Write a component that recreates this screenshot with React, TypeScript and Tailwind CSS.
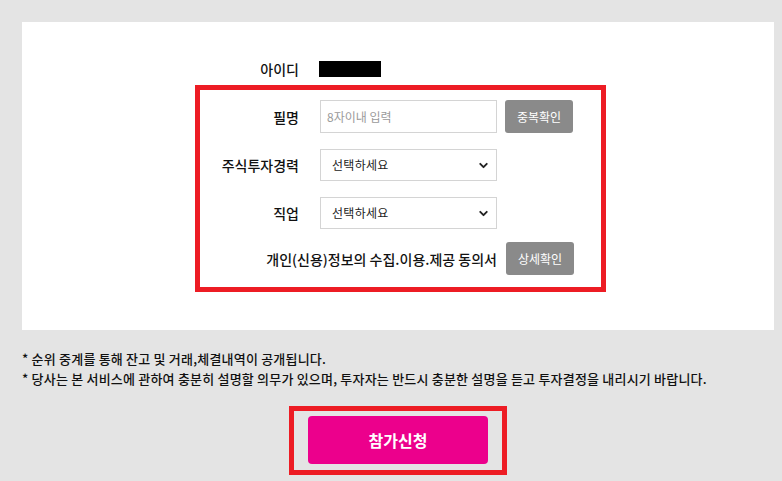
import { ChevronDown } from 'lucide-react';

const font = "font-['Noto_Sans_CJK_KR','Noto_Sans',sans-serif]";

function Row({ label, children, className = '' }: { label: string; children: React.ReactNode; className?: string }) {
  return (
    <div className={`flex items-center ${className}`}>
      <div className="w-[99px] shrink-0 text-right text-[14px] leading-[20px] font-medium text-[#111]">{label}</div>
      <div className="ml-[21px] flex items-center">{children}</div>
    </div>
  );
}

function Select() {
  return (
    <div className="relative w-[177px]">
      <select className="block h-[32px] w-full appearance-none border border-[#d4d4d4] bg-white pl-[11px] text-[12px] tracking-[0.3px] text-[#222] outline-none">
        <option>선택하세요</option>
      </select>
      <ChevronDown
        size={13}
        strokeWidth={3.5}
        className="pointer-events-none absolute right-[7px] top-[10px] text-[#222]"
      />
    </div>
  );
}

function GrayButton({ children }: { children: React.ReactNode }) {
  return (
    <button className="block h-[33px] w-[68px] rounded-[3px] bg-[#8a8a8a] text-[12px] text-white">{children}</button>
  );
}

export default function App() {
  return (
    <div className={`min-h-[481px] w-[782px] bg-[#e4e4e4] pl-[22px] pt-[22px] ${font}`}>
      <div className="h-[308px] w-[752px] bg-white pt-[37px]">
        {/* 아이디 */}
        <div className="ml-[178px] flex h-[20px] items-center">
          <div className="w-[99px] text-right text-[14px] leading-[20px] font-medium text-[#111]">아이디</div>
          <div className="ml-[20px] h-[16px] w-[62px] bg-black" />
        </div>

        <div className="ml-[173px] mt-[6px] w-[411px] border-[5px] border-[#ed1c24] pb-[12px] pt-[10px]">
          <Row label="필명">
            <input
              placeholder="8자이내 입력"
              className="block h-[33px] w-[177px] border border-[#d4d4d4] pl-[6px] text-[12px] outline-none placeholder:text-[#9a9a9a]"
            />
            <div className="ml-[8px]">
              <GrayButton>중복확인</GrayButton>
            </div>
          </Row>
          <Row label="주식투자경력" className="mt-[16px]">
            <Select />
          </Row>
          <Row label="직업" className="mt-[16px]">
            <Select />
          </Row>
          <div className="mt-[13px] flex items-center justify-end pr-[27px]">
            <span className="text-[14px] leading-[20px] font-medium text-[#111]">개인(신용)정보의 수집.이용.제공 동의서</span>
            <div className="ml-[9px]">
              <GrayButton>상세확인</GrayButton>
            </div>
          </div>
        </div>
      </div>

      <div className="mt-[19px] text-[13px] font-medium leading-[20px] tracking-[0.2px] text-[#111]">
        <p>* 순위 중계를 통해 잔고 및 거래,체결내역이 공개됩니다.</p>
        <p>* 당사는 본 서비스에 관하여 충분히 설명할 의무가 있으며, 투자자는 반드시 충분한 설명을 듣고 투자결정을 내리시기 바랍니다.</p>
      </div>

      <div className="mt-[17px] w-[752px]">
        <div className="mx-auto w-[218px] border-[5px] border-[#ed1c24] px-[14px] pb-[6px] pt-[5px]">
          <button className="block h-[48px] w-[180px] rounded-[4px] bg-[#ec008c] text-[16px] font-bold text-white">
            참가신청
          </button>
        </div>
      </div>
    </div>
  );
}
